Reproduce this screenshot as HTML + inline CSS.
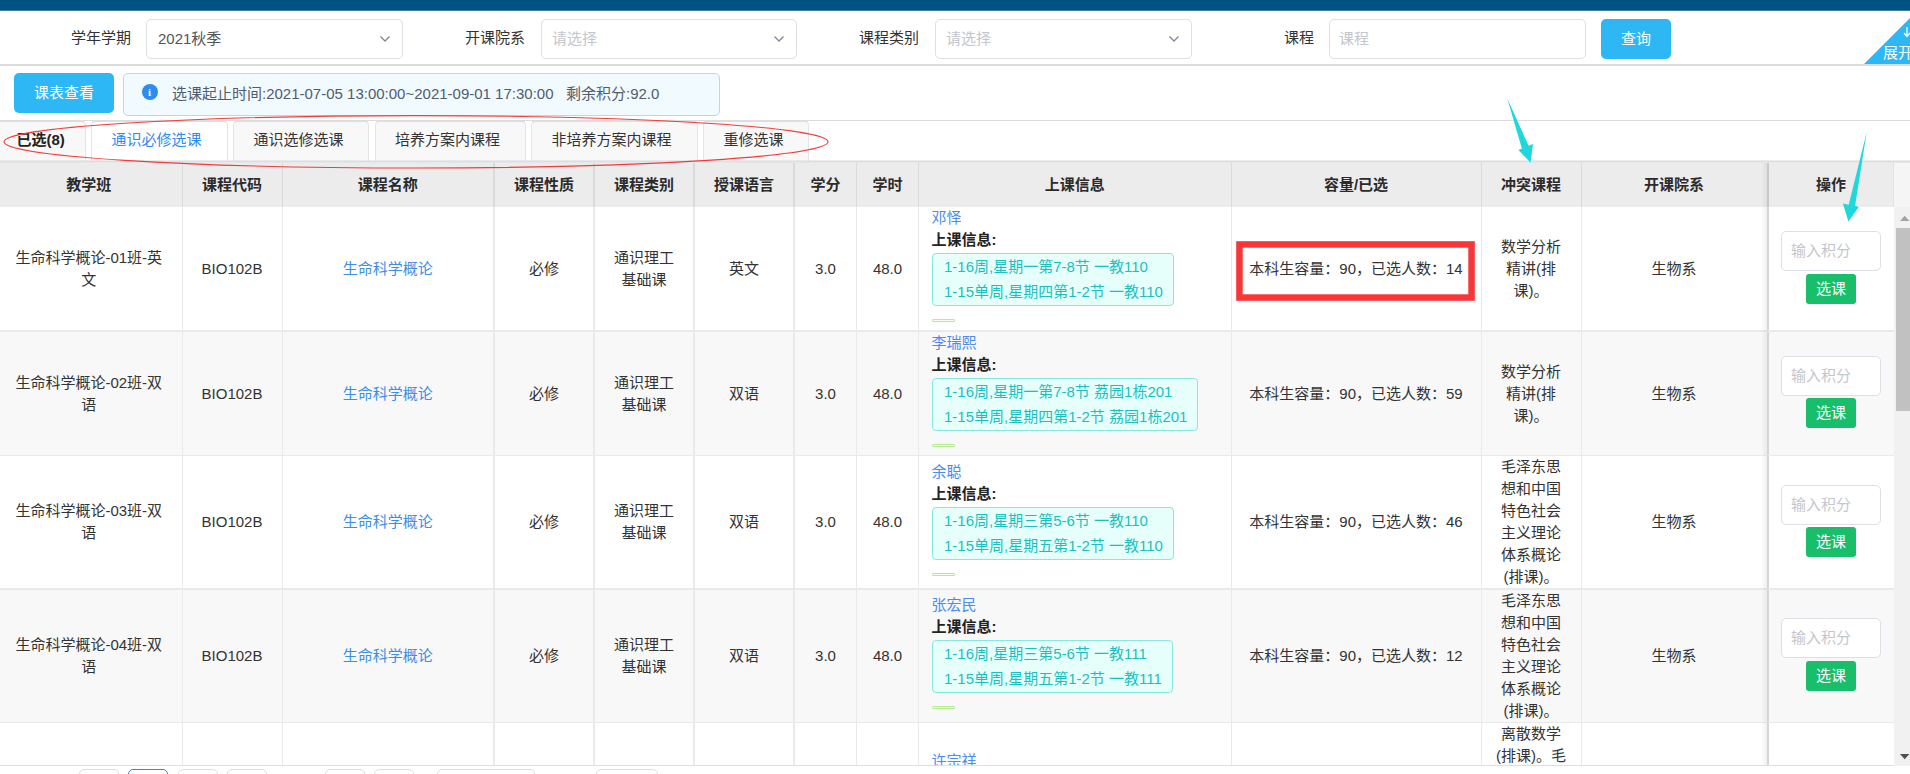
<!DOCTYPE html>
<html lang="zh-CN">
<head>
<meta charset="utf-8">
<title>选课</title>
<style>
*{box-sizing:border-box;margin:0;padding:0}
html,body{width:1910px;height:774px;overflow:hidden;background:#fff}
body{position:relative;font-family:"Liberation Sans","Noto Sans CJK SC",sans-serif;font-size:15px;color:#333;line-height:22px}
.abs{position:absolute}
#topbar{left:0;top:0;width:1910px;height:11px;background:linear-gradient(#005285 0,#005285 10px,#3f7ca3 10px)}
.flabel{top:19px;height:40px;line-height:38px;font-size:15px;color:#333;text-align:right;white-space:nowrap}
.fsel{top:19px;height:40px;width:257px;border:1px solid #dcdfe6;border-radius:5px;background:#fff;line-height:38px;padding-left:11px;font-size:15px;color:#555;white-space:nowrap}
.fsel.ph{color:#c3c6cc;padding-left:10px}
.fsel svg{position:absolute;right:11.5px;top:13.4px}
.btn{color:#fff;background:#2db7f5;border-radius:5px;text-align:center;font-size:15px;white-space:nowrap}
#hr1{left:0;top:64px;width:1910px;height:2px;background:#dcdcdc}
#hr2{left:0;top:120px;width:1910px;height:1px;background:#dcdcdc}
#alert{left:123px;top:73px;width:597px;height:43px;border:1px solid #abdcff;background:#f0faff;border-radius:5px;line-height:39px;font-size:15px;color:#515a6e;white-space:nowrap}
#alert .ic{position:absolute;left:17.5px;top:10px;width:16px;height:16px;border-radius:50%;background:#2d8cf0;color:#fff;font:bold 11px/16px "Liberation Serif",serif;text-align:center}
#alert .tx{position:absolute;left:48px;top:0}
#tabs{left:0;top:120px;width:1910px;height:43px}
#tabs:before{content:"";position:absolute;left:0;top:40px;width:1910px;height:1px;background:rgba(215,217,222,.5);z-index:2}
#tabs:after{content:"";position:absolute;left:0;top:41px;width:1910px;height:2px;background:linear-gradient(#dcdee2 0,#dcdee2 1px,#e6e7e9 1px);z-index:2}
.tab{position:absolute;top:0;height:41px;border:1px solid #e3e5e8;border-top:2px solid #dddddd;border-bottom:0;border-radius:5px 5px 0 0;background:#f8f8f9;text-align:left;padding-left:19.5px;line-height:36px;font-size:15px;color:#333;white-space:nowrap}
.tab.on{background:#fff;color:#2d8cf0}
.tab.b{font-weight:bold;color:#222}
#tblwrap{left:-4px;top:163px;width:1914px;height:603px;overflow:hidden;border-bottom:1px solid #dcdee2}
table{border-collapse:separate;border-spacing:0;table-layout:fixed;width:1897.5px}
th,td{border-right:1px solid #e8eaec;border-bottom:1px solid #e8eaec;text-align:center;vertical-align:middle;font-size:15px;line-height:22px;color:#333;padding:0 14px;overflow:hidden}
th{background:#ececec;height:44px;font-weight:bold;color:#2b2b2b;border-bottom:0;border-right-color:#dadada}
tr.alt td{background:#f8f8f8}
tr.b2 td{border-bottom-width:2px}
tr>*:nth-child(n+3):nth-child(-n+6){border-right-width:2px}
td:nth-child(12){border-right-color:#d4d6da}
th:nth-child(12){border-right-color:#c9c9c9}
td a{color:#3a8ee6;text-decoration:none}
td.info{text-align:left;padding:0 0 0 12.5px}
td.info a{display:block;height:22px;color:#4a8cf0}
td.info b{display:block;height:24px;line-height:21px;color:#222}
.tag{display:inline-block;border:1px solid #87e8de;background:#e6fffb;border-radius:4px;color:#1bbfbf;line-height:25px;padding:0 10px 1px 11.5px;white-space:nowrap;vertical-align:top}
.gl{display:block;width:23px;height:3px;border:1px solid #b7eb8f;background:#f6ffed;border-radius:1px;margin-top:13px;margin-bottom:8px}
td.conf{padding:0 14px}
td.op{vertical-align:top;padding:0;border-right:0;box-shadow:inset 1px 0 0 #d4d6da}
th.op{padding:0 14px 0 16px;box-shadow:inset 1px 0 0 #c9c9c9;border-right:1px solid #e2e2e2}
.inp{display:block;width:100px;height:40px;border:1px solid #dcdfe6;border-radius:5px;background:#fff;margin:0 0 0 13.5px;line-height:38px;text-align:left;padding-left:9px;color:#c3c6cc}
.gbtn{display:block;width:50px;height:30px;background:#19be6b;border-radius:3px;color:#fff;line-height:29px;margin:0 0 0 38.5px;text-align:center}
#shadow{left:1761px;top:163px;width:6px;height:602px;background:linear-gradient(to right,rgba(0,0,0,0),rgba(0,0,0,.06))}
#sb{left:1893.5px;top:162px;width:16.5px;height:604px;background:#f1f1f1}
#sbh{left:1893.5px;top:162px;width:16.5px;height:44.5px;background:#f5f5f5}
#thumb{left:1896px;top:228px;width:14px;height:183px;background:#c1c1c1}
.pg{top:769px;height:12px;border:1px solid #dcdee2;border-radius:5px;background:#fff}
</style>
</head>
<body>
<div id="topbar" class="abs"></div>

<div class="abs flabel" style="left:31px;width:100px">学年学期</div>
<div class="abs fsel" style="left:146px">2021秋季<svg width="12" height="12" viewBox="0 0 12 12"><path d="M1.5 3.5 L6 8 L10.5 3.5" fill="none" stroke="#808695" stroke-width="1.3"/></svg></div>
<div class="abs flabel" style="left:425px;width:100px">开课院系</div>
<div class="abs fsel ph" style="left:541px;width:256px">请选择<svg width="12" height="12" viewBox="0 0 12 12"><path d="M1.5 3.5 L6 8 L10.5 3.5" fill="none" stroke="#808695" stroke-width="1.3"/></svg></div>
<div class="abs flabel" style="left:819px;width:100px">课程类别</div>
<div class="abs fsel ph" style="left:935px">请选择<svg width="12" height="12" viewBox="0 0 12 12"><path d="M1.5 3.5 L6 8 L10.5 3.5" fill="none" stroke="#808695" stroke-width="1.3"/></svg></div>
<div class="abs flabel" style="left:1214px;width:100px">课程</div>
<div class="abs fsel ph" style="left:1329px;padding-left:9px">课程</div>
<div class="abs btn" style="left:1601px;top:19px;width:70px;height:40px;line-height:39px">查询</div>

<svg class="abs" style="left:1864px;top:18px" width="46" height="46" viewBox="0 0 46 46"><polygon points="0,46 46,0 46,46" fill="#2db7f5"/><path d="M43 9 v9 M40 15 l3 3.5 l3 -3.5" stroke="#fff" stroke-width="1.3" fill="none"/><text x="19" y="40" font-size="15" fill="#fff" font-family="Liberation Sans, Noto Sans CJK SC, sans-serif">展开</text></svg>

<div id="hr1" class="abs"></div>
<div class="abs btn" style="left:14px;top:73px;width:100px;height:40px;line-height:39px">课表查看</div>
<div id="alert" class="abs"><span class="ic">i</span><span class="tx">选课起止时间:2021-07-05 13:00:00~2021-09-01 17:30:00 &nbsp; 剩余积分:92.0</span></div>
<div id="hr2" class="abs"></div>

<div id="tabs" class="abs">
<div class="tab b" style="left:-6px;width:91.5px;padding-left:21.5px">已选(8)</div>
<div class="tab on" style="left:91px;width:136.5px">通识必修选课</div>
<div class="tab" style="left:233px;width:136px">通识选修选课</div>
<div class="tab" style="left:374.5px;width:151px">培养方案内课程</div>
<div class="tab" style="left:531px;width:166.5px">非培养方案内课程</div>
<div class="tab" style="left:703px;width:106px">重修选课</div>
</div>

<div id="tblwrap" class="abs">
<table>
<colgroup><col style="width:186.5px"><col style="width:100px"><col style="width:212.5px"><col style="width:100px"><col style="width:100px"><col style="width:100px"><col style="width:62px"><col style="width:62px"><col style="width:312.5px"><col style="width:250px"><col style="width:100px"><col style="width:186px"><col style="width:126px"></colgroup>
<tr><th>教学班</th><th>课程代码</th><th>课程名称</th><th>课程性质</th><th>课程类别</th><th>授课语言</th><th>学分</th><th>学时</th><th>上课信息</th><th>容量/已选</th><th>冲突课程</th><th>开课院系</th><th class="op">操作</th></tr>
<tr class="b2" style="height:125px"><td>生命科学概论-01班-英文</td><td>BIO102B</td><td><a>生命科学概论</a></td><td>必修</td><td>通识理工基础课</td><td>英文</td><td>3.0</td><td>48.0</td>
<td class="info"><a>邓怿</a><b>上课信息:</b><span class="tag">1-16周,星期一第7-8节 一教110<br>1-15单周,星期四第1-2节 一教110</span><i class="gl"></i></td>
<td>本科生容量：90，已选人数：14</td><td class="conf">数学分析精讲(排课)。</td><td>生物系</td><td class="op"><span class="inp" style="margin-top:24px">输入积分</span><span class="gbtn" style="margin-top:3px">选课</span></td></tr>
<tr class="alt" style="height:124px"><td>生命科学概论-02班-双语</td><td>BIO102B</td><td><a>生命科学概论</a></td><td>必修</td><td>通识理工基础课</td><td>双语</td><td>3.0</td><td>48.0</td>
<td class="info"><a>李瑞熙</a><b>上课信息:</b><span class="tag">1-16周,星期一第7-8节 荔园1栋201<br>1-15单周,星期四第1-2节 荔园1栋201</span><i class="gl"></i></td>
<td>本科生容量：90，已选人数：59</td><td class="conf">数学分析精讲(排课)。</td><td>生物系</td><td class="op"><span class="inp" style="margin-top:24px">输入积分</span><span class="gbtn" style="margin-top:2px">选课</span></td></tr>
<tr class="b2" style="height:134px"><td>生命科学概论-03班-双语</td><td>BIO102B</td><td><a>生命科学概论</a></td><td>必修</td><td>通识理工基础课</td><td>双语</td><td>3.0</td><td>48.0</td>
<td class="info"><a>余聪</a><b>上课信息:</b><span class="tag">1-16周,星期三第5-6节 一教110<br>1-15单周,星期五第1-2节 一教110</span><i class="gl"></i></td>
<td>本科生容量：90，已选人数：46</td><td class="conf">毛泽东思想和中国特色社会主义理论体系概论(排课)。</td><td>生物系</td><td class="op"><span class="inp" style="margin-top:29px">输入积分</span><span class="gbtn" style="margin-top:2px">选课</span></td></tr>
<tr class="alt" style="height:133px"><td>生命科学概论-04班-双语</td><td>BIO102B</td><td><a>生命科学概论</a></td><td>必修</td><td>通识理工基础课</td><td>双语</td><td>3.0</td><td>48.0</td>
<td class="info" style="padding-bottom:2px"><a>张宏民</a><b>上课信息:</b><span class="tag">1-16周,星期三第5-6节 一教111<br>1-15单周,星期五第1-2节 一教111</span><i class="gl"></i></td>
<td>本科生容量：90，已选人数：12</td><td class="conf">毛泽东思想和中国特色社会主义理论体系概论(排课)。</td><td>生物系</td><td class="op"><span class="inp" style="margin-top:28px">输入积分</span><span class="gbtn" style="margin-top:3px">选课</span></td></tr>
<tr style="height:177px"><td>生命科学概论-05班-双语</td><td>BIO102B</td><td><a>生命科学概论</a></td><td>必修</td><td>通识理工基础课</td><td>双语</td><td>3.0</td><td>48.0</td>
<td class="info"><a>许宗祥</a><b>上课信息:</b><span class="tag">1-16周,星期二第3-4节 一教111<br>1-15单周,星期四第3-4节 一教111</span><i class="gl"></i></td>
<td>本科生容量：90，已选人数：33</td><td class="conf">离散数学(排课)。毛泽东思想和中国特色社会主义理论体系概论(排课)。</td><td>生物系</td><td class="op"><span class="inp" style="margin-top:50px">输入积分</span><span class="gbtn" style="margin-top:3px">选课</span></td></tr>
</table>
</div>
<div id="shadow" class="abs"></div>
<div id="sb" class="abs"></div>
<div id="sbh" class="abs"></div>
<div id="thumb" class="abs"></div>
<svg class="abs" style="left:1894px;top:206px" width="16" height="560" viewBox="0 0 16 560"><polygon points="6,15 15.4,15 10.7,9.7" fill="#a3a3a3"/><polygon points="6,548 15.4,548 10.7,553.3" fill="#505050"/></svg>

<div class="abs pg" style="left:79px;width:40px"></div>
<div class="abs pg" style="left:128px;width:40px;border-color:#2d8cf0"></div>
<div class="abs pg" style="left:178px;width:40px"></div>
<div class="abs pg" style="left:227px;width:40px"></div>
<div class="abs pg" style="left:325px;width:40px"></div>
<div class="abs pg" style="left:374px;width:40px"></div>
<div class="abs pg" style="left:437px;width:98px"></div>
<div class="abs pg" style="left:596px;width:62px"></div>

<svg class="abs" style="left:0;top:0;pointer-events:none;z-index:10" width="1910" height="774" viewBox="0 0 1910 774">
<ellipse cx="416" cy="141.8" rx="412" ry="26.2" fill="none" stroke="#f23c3c" stroke-width="1.1"/>
<rect x="1239.45" y="244.45" width="232.1" height="53.1" fill="none" stroke="#f83538" stroke-width="6.5"/>
<polygon points="1507.2,98.3 1521.9,148.4 1518.4,150 1530.6,162.7 1533,144 1528.6,145.8" fill="#1fd8dc"/>
<polygon points="1866.7,132 1848.7,204.7 1842.9,203.5 1848.4,221.5 1858.8,207 1855.1,205.8" fill="#1fd8dc"/>
</svg>
</body>
</html>
